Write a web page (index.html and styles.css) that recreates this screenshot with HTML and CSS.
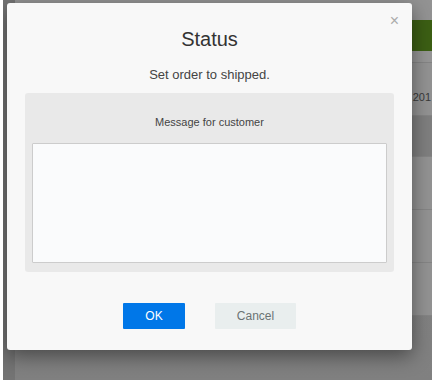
FILE: index.html
```html
<!DOCTYPE html>
<html lang="en">
<head>
    <meta charset="UTF-8">
    <meta name="viewport" content="width=device-width, initial-scale=1.0">
    <title>Status</title>
    <link rel="stylesheet" href="styles.css">
</head>
<body>
    <div class="screen">
        <div class="page">
            <div class="sidebar"></div>
            <div class="content">
                <div class="row row-top"></div>
                <div class="row row-action"><span class="green-btn"></span></div>
                <div class="row row-gap"></div>
                <div class="row row-data"><span class="date">201</span></div>
                <div class="row row-dark"></div>
                <div class="row row-data"></div>
                <div class="row row-data"></div>
                <div class="row row-data"></div>
            </div>
        </div>

        <div class="modal">
            <span class="close">&times;</span>
            <h2 class="modal-title">Status</h2>
            <p class="modal-text">Set order to shipped.</p>
            <div class="message-box">
                <label class="message-label" for="message">Message for customer</label>
                <textarea id="message" class="message-input"></textarea>
            </div>
            <div class="modal-buttons">
                <button class="btn btn-ok">OK</button>
                <button class="btn btn-cancel">Cancel</button>
            </div>
        </div>
    </div>
</body>
</html>
```

FILE: styles.css
```css
body {
    margin: 0;
    background: #ffffff;
    font-family: "Liberation Sans", Arial, sans-serif;
}

.screen {
    position: relative;
    margin-left: 3px;
    height: 380px;
    overflow: hidden;
    background: linear-gradient(#8a8a8a, #808080);
}

/* page behind the dimmed overlay */
.page {
    display: flex;
    height: 100%;
}

.sidebar {
    width: 12px;
    background: #747474;
}

.content {
    flex: 1;
    display: flex;
    flex-direction: column;
}

.row {
    border-bottom: 1px solid #858585;
}

.row-top {
    height: 20px;
    background: #939393;
    border-bottom: none;
}

.row-action {
    height: 31px;
    background: #949494;
    display: flex;
    justify-content: flex-end;
    border-bottom: none;
}

.green-btn {
    width: 80px;
    background: #3c5f14;
}

.row-gap {
    height: 11px;
    background: #969696;
}

.row-data {
    height: 52px;
    background: #939393;
    display: flex;
    justify-content: flex-end;
    align-items: center;
}

.date {
    font-size: 11px;
    color: #3a3a3a;
    padding-top: 16px;
    padding-right: 1px;
}

.row-dark {
    height: 40px;
    background: #7f7f7f;
}

/* modal */
.modal {
    position: absolute;
    top: 3px;
    left: 4px;
    width: 405px;
    height: 347px;
    box-sizing: border-box;
    padding-top: 24px;
    background: #f8f8f8;
    border-radius: 3px;
    box-shadow: 0 6px 20px rgba(0, 0, 0, 0.45);
    text-align: center;
}

.close {
    position: absolute;
    top: 9px;
    right: 13px;
    font-size: 16px;
    color: #ababab;
    cursor: pointer;
}

.modal-title {
    margin: 0;
    font-size: 20px;
    line-height: 24px;
    font-weight: 400;
    color: #333333;
}

.modal-text {
    margin: 16px 0 0;
    font-size: 13px;
    line-height: 16px;
    color: #444444;
}

.message-box {
    margin: 10px 18px 0;
    height: 179px;
    box-sizing: border-box;
    padding: 22px 7px 9px;
    background: #e9e9e9;
    border-radius: 3px;
    display: flex;
    flex-direction: column;
}

.message-label {
    font-size: 11px;
    line-height: 14px;
    color: #444444;
    margin-bottom: 14px;
}

.message-input {
    flex: 1;
    margin: 0;
    border: 1px solid #cccccc;
    background: #fafbfc;
    resize: none;
    border-radius: 1px;
}

.modal-buttons {
    display: flex;
    justify-content: center;
    gap: 30px;
    margin-top: 31px;
}

.btn {
    height: 26px;
    border: none;
    border-radius: 1px;
    font-family: "Liberation Sans", Arial, sans-serif;
    font-size: 12px;
    cursor: pointer;
}

.btn-ok {
    width: 62px;
    background: #0077e8;
    color: #ffffff;
}

.btn-cancel {
    width: 81px;
    background: #e9eeee;
    color: #6b7373;
}
```
